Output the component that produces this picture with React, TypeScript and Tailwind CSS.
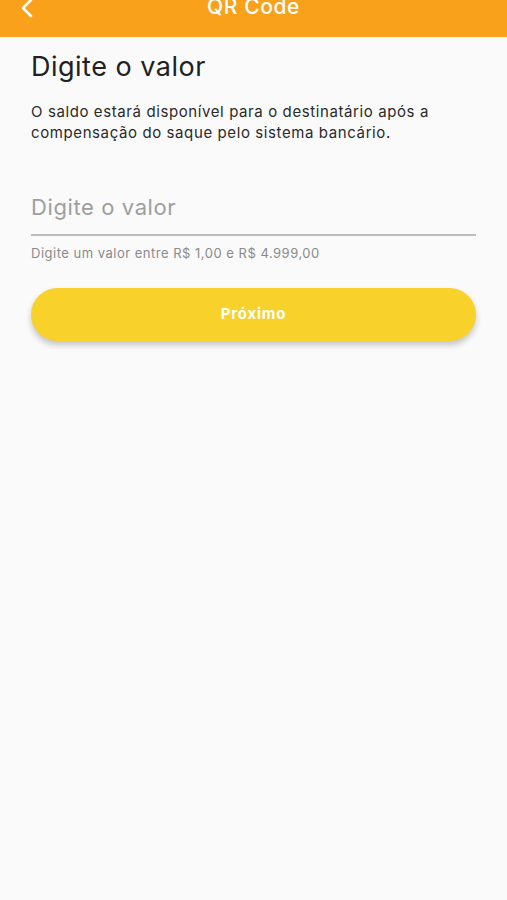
import React from 'react'

export default function App() {
  return (
    <div className="min-h-[900px] w-full bg-[#fafafa]" style={{ fontFamily: 'Inter, "Noto Sans", sans-serif' }}>
      {/* Header */}
      <div className="relative h-[37px] bg-[#f9a11b] overflow-hidden">
        <svg className="absolute left-[19px] top-[-2px]" width="16" height="20" viewBox="0 0 16 20" fill="none">
          <path d="M12 2 L4 10 L12 18" stroke="white" strokeWidth="2.6" strokeLinecap="round" strokeLinejoin="round" />
        </svg>
        <div className="absolute left-0 right-0 top-[-7px] text-center text-[21px] leading-[28px] font-medium tracking-[0.6px] text-white">
          QR Code
        </div>
      </div>

      {/* Content */}
      <div className="px-[31px] pt-[13px]">
        <h1 className="text-[27px] leading-[34px] tracking-[0.5px] text-[#212121] font-normal">Digite o valor</h1>
        <p className="mt-[17px] text-[15px] leading-[21px] tracking-[0.6px] text-[#2a2a2a]">
          O saldo estará disponível para o destinatário após a compensação do saque pelo sistema bancário.
        </p>

        <div className="mt-[37px]">
          <div className="h-[56px] flex items-center border-b-[2px] border-[#bdbdbd]">
            <span className="text-[22px] tracking-[0.6px] text-[#9e9e9e]">Digite o valor</span>
          </div>
          <p className="mt-[9px] text-[13px] leading-[17px] tracking-[0.5px] text-[#8a8a8a]">
            Digite um valor entre R$ 1,00 e R$ 4.999,00
          </p>
        </div>

        <button className="mt-[26px] w-full h-[53px] rounded-full bg-[#f8d12b] text-white font-bold text-[15px] tracking-[0.8px] shadow-[0_4px_6px_rgba(0,0,0,0.22)]">
          Próximo
        </button>
      </div>
    </div>
  )
}
